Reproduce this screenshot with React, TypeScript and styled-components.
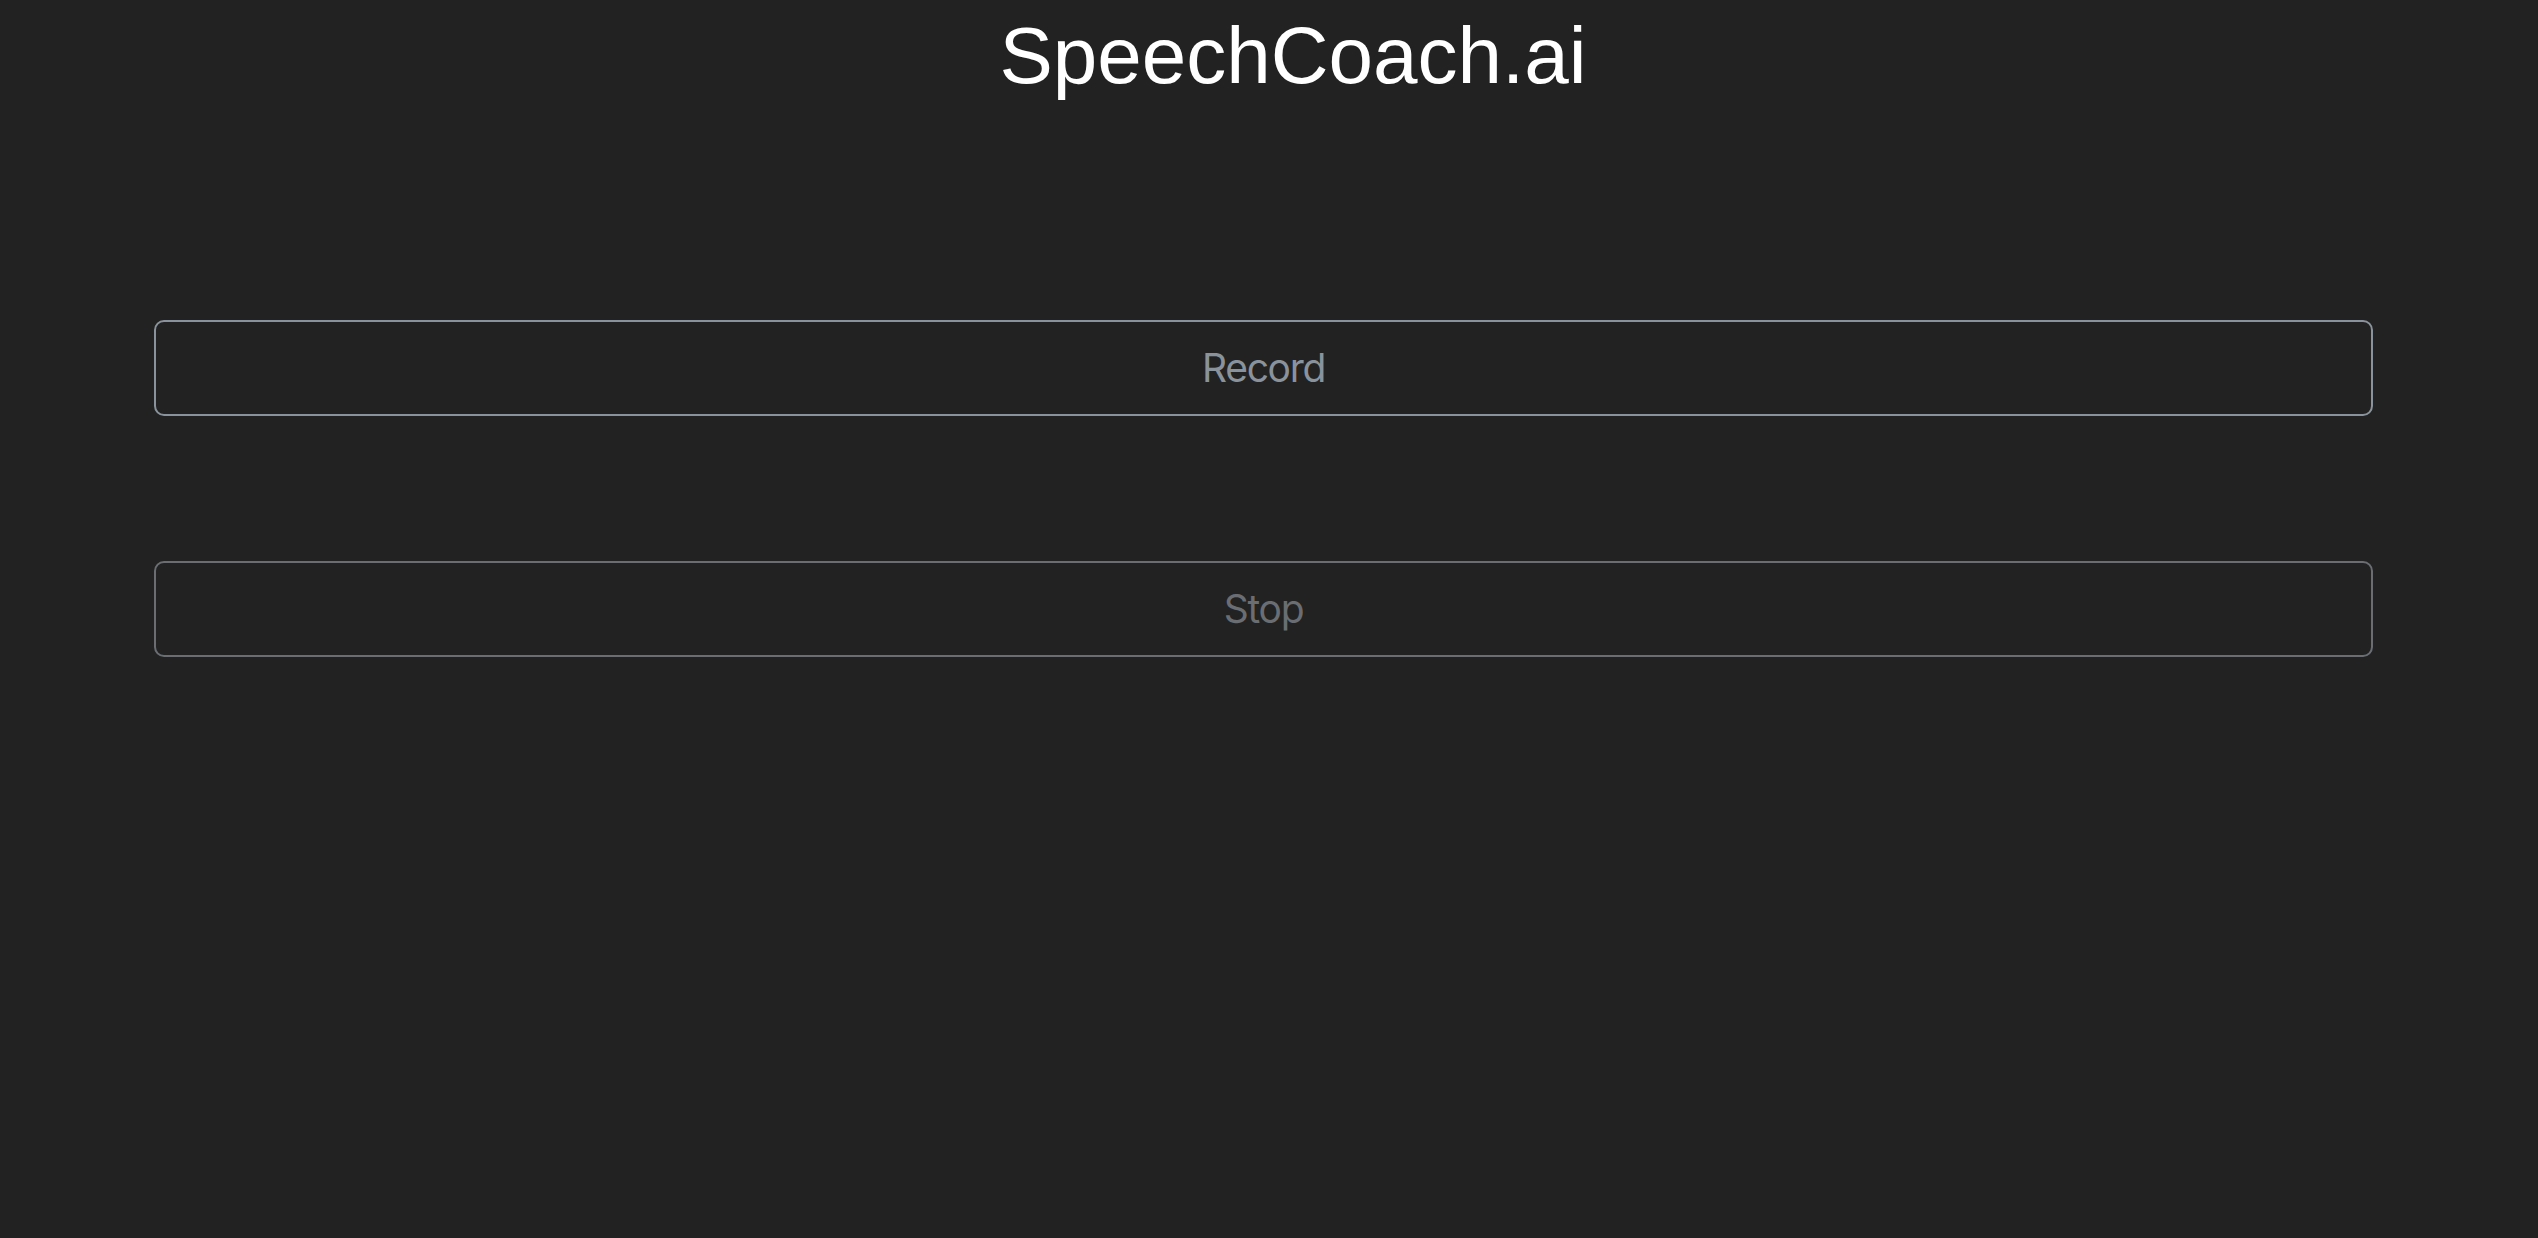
import React from "react";
import styled, { createGlobalStyle } from "styled-components";

const GlobalStyle = createGlobalStyle`
  html, body {
    margin: 0;
    padding: 0;
    background: #222222;
    min-height: 100%;
  }
  #root {
    min-height: 100vh;
  }
`;

const Page = styled.main`
  min-height: 100vh;
  box-sizing: border-box;
  padding: 8px 165px 0 154px;
  background: #222222;
  display: flex;
  flex-direction: column;
`;

const Title = styled.h1`
  margin: 0 0 16px;
  padding-left: 48px;
  margin-left: -154px;
  margin-right: -165px;
  text-align: center;
  font-family: "Liberation Sans", Arial, Helvetica, sans-serif;
  font-weight: 400;
  font-size: 80px;
  line-height: 1.2;
  color: #ffffff;
`;

const Actions = styled.div`
  display: flex;
  flex-direction: column;
  gap: 145px;
  margin-top: 200px;
`;

const ActionButton = styled.button<{ $muted?: boolean }>`
  display: block;
  width: 100%;
  box-sizing: border-box;
  padding: 16px 32px;
  border: 2px solid ${(p) => (p.$muted ? "#6a6e73" : "#8a939b")};
  border-radius: 10px;
  background: transparent;
  color: ${(p) => (p.$muted ? "#6a6e73" : "#8a939b")};
  font-family: Inter, "Noto Sans", "Liberation Sans", sans-serif;
  font-size: 39px;
  letter-spacing: -1.3px;
  line-height: 60px;
  font-weight: 400;
  text-align: center;
  cursor: ${(p) => (p.$muted ? "default" : "pointer")};
`;

export default function App() {
  return (
    <>
      <GlobalStyle />
      <Page>
        <Title>SpeechCoach.ai</Title>
        <Actions>
          <ActionButton type="button">Record</ActionButton>
          <ActionButton type="button" $muted disabled>
            Stop
          </ActionButton>
        </Actions>
      </Page>
    </>
  );
}
